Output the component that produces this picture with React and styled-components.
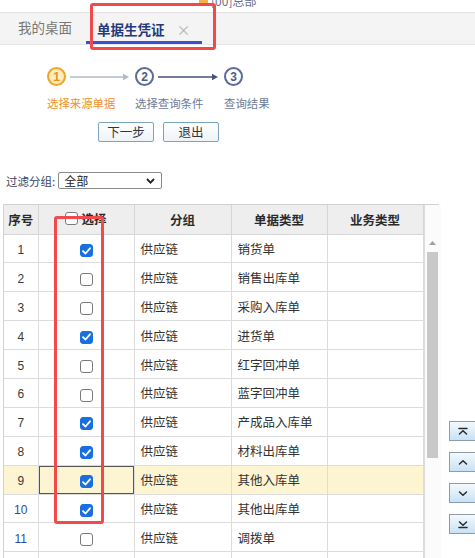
import React from 'react';
import styled, { createGlobalStyle } from 'styled-components';

const Global = createGlobalStyle`
  html, body { margin: 0; padding: 0; background: #fff; }
  body {
    font-family: "Noto Sans CJK SC", "Microsoft YaHei", sans-serif;
    color: #333;
  }
  * { box-sizing: border-box; }
`;

const Page = styled.div`
  width: 475px;
  height: 558px;
  overflow: hidden;
  background: #fff;
`;

/* ---------- header strip & tabs ---------- */
const TopStrip = styled.div`
  height: 12px;
  overflow: hidden;
  padding-left: 199px;
`;

const OrgLabel = styled.div`
  margin-top: -7px;
  display: flex;
  align-items: center;
  gap: 3px;
  font-size: 12px;
  line-height: 16px;
  color: #6a7088;
`;

const OrgIcon = styled.span`
  width: 9px;
  height: 10px;
  border-radius: 1px;
  background: #f2b24a;
`;

const TabBar = styled.div`
  height: 33px;
  display: flex;
  padding-left: 18px;
  gap: 14px;
  background: #f4f4f4;
  border-top: 1px solid #e2e2e2;
  border-bottom: 1px solid #e6e6e6;
`;

const Tab = styled.div`
  position: relative;
  height: 31px;
  padding: 3px ${p => (p.$active ? '11px 0 11px' : '0')};
  display: flex;
  align-items: center;
  gap: 12px;
  font-size: 13.5px;
  line-height: 18px;
  font-weight: ${p => (p.$active ? 700 : 400)};
  color: ${p => (p.$active ? '#26387a' : '#777')};
  border-bottom: 3px solid ${p => (p.$active ? '#3b4fd0' : 'transparent')};

  ${p =>
    p.$marked &&
    `&::after {
      content: '';
      position: absolute;
      left: 4px;
      right: -14px;
      top: -10px;
      bottom: -9px;
      border: 3px solid #f04a4a;
      border-radius: 3px;
      pointer-events: none;
    }`}
`;

const CloseMark = styled.span`
  font-size: 14px;
  font-weight: 400;
  color: #b4b4b4;
`;

/* ---------- wizard steps ---------- */
const Steps = styled.div`
  margin: 22px 0 0 47px;
  display: grid;
  grid-template-columns: 88px 89px auto;
  row-gap: 9px;
`;

const StepHead = styled.div`
  display: flex;
  align-items: center;
  height: 19px;
`;

const Circle = styled.div`
  width: 19px;
  height: 19px;
  border-radius: 50%;
  flex: none;
  display: flex;
  align-items: center;
  justify-content: center;
  font-family: "Liberation Sans", Arial, sans-serif;
  font-size: 12px;
  font-weight: 700;
  border: 2px solid ${p => (p.$current ? '#f0a52a' : '#5b6a98')};
  background: ${p =>
    p.$current ? 'radial-gradient(circle, #fff6d8 0%, #fde3a0 100%)' : '#fff'};
  color: ${p => (p.$current ? '#e8901e' : '#4c5a8c')};
`;

const Connector = styled.svg`
  margin-left: ${p => p.$gap}px;
  flex: none;
`;

const StepLabel = styled.div`
  font-size: 11.4px;
  line-height: 16px;
  white-space: nowrap;
  color: ${p => (p.$current ? '#f0902a' : '#6c7a9a')};
`;

const ButtonRow = styled.div`
  margin: 11px 0 0 98px;
  display: flex;
  gap: 9px;
`;

const WizardButton = styled.button`
  width: 56px;
  height: 20px;
  padding: 0;
  font-family: inherit;
  font-size: 12.5px;
  line-height: 16px;
  color: #333;
  background: linear-gradient(#ffffff, #eef3f7);
  border: 1px solid #7ba4be;
  border-radius: 2px;
`;

/* ---------- filter ---------- */
const FilterRow = styled.div`
  margin: 30px 0 0 6px;
  display: flex;
  align-items: center;
  gap: 3px;
  height: 17px;
`;

const FilterLabel = styled.span`
  font-size: 11.5px;
  color: #3a4560;
`;

const FakeSelect = styled.div`
  width: 104px;
  height: 17px;
  border: 1px solid #8a8a8a;
  border-radius: 2px;
  padding: 0 6px 0 5px;
  display: flex;
  align-items: center;
  justify-content: space-between;
  font-size: 12px;
  color: #222;
`;

/* ---------- grid ---------- */
const GridArea = styled.div`
  margin-top: 15px;
  display: flex;
  align-items: flex-start;
`;

const GridFrame = styled.div`
  position: relative;
  margin-left: 3px;
  width: 436px;
  display: flex;
  border: 1px solid #d2d2d2;
  border-bottom: none;
`;

const Marker = styled.div`
  position: absolute;
  left: 50px;
  top: 11px;
  width: 50px;
  height: 308px;
  border: 3px solid #f04a4a;
  border-radius: 3px;
  pointer-events: none;
`;

const Table = styled.table`
  width: 419px;
  table-layout: fixed;
  border-collapse: collapse;
  font-size: 12.5px;
`;

const HeadCell = styled.th`
  height: 29px;
  padding: 0;
  background: #eeeeee;
  border: 1px solid #d6d6d6;
  border-top: none;
  font-weight: 700;
  color: #2a2a2a;
  text-align: center;
  &:first-child { border-left: none; }
`;

const HeadInner = styled.span`
  display: inline-flex;
  align-items: center;
  gap: 3px;
`;

const Row = styled.tr`
  height: 28.9px;
  background: ${p => (p.$current ? '#fdf4d2' : '#fff')};
`;

const Cell = styled.td`
  padding: 0 ${p => (p.$align === 'center' ? '0' : '6px')};
  border: 1px solid #dcdcdc;
  text-align: ${p => p.$align || 'left'};
  color: ${p => p.$color || '#333'};
  white-space: nowrap;
  overflow: hidden;
  box-shadow: ${p => (p.$focused ? 'inset 0 0 0 1px #555' : 'none')};
  &:first-child { border-left: none; }
`;

const NumText = styled.span`
  font-family: "Liberation Sans", Arial, sans-serif;
  font-size: 12px;
`;

const Check = styled.span`
  display: inline-flex;
  align-items: center;
  justify-content: center;
  vertical-align: middle;
  width: 13px;
  height: 13px;
  border-radius: 3px;
  border: 1px solid ${p => (p.$on ? '#1a6fe0' : '#7a7a7a')};
  background: ${p => (p.$on ? '#1a6fe0' : '#fff')};
`;

const ScrollCol = styled.div`
  width: 17px;
  flex: none;
  padding: 29px 2px 0 2px;
  border-left: 1px solid #dcdcdc;
  background: #fbfbfb;
  display: flex;
  flex-direction: column;
  align-items: center;
`;

const ScrollArrow = styled.div`
  height: 18px;
  display: flex;
  align-items: center;
  justify-content: center;
`;

const Thumb = styled.div`
  width: 11px;
  height: 206px;
  background: #c8c8c8;
`;

const MoveColumn = styled.div`
  margin: 217px 0 0 10px;
  display: flex;
  flex-direction: column;
  gap: 11px;
`;

const MoveButton = styled.div`
  width: 32px;
  height: 20px;
  padding-left: 8px;
  display: flex;
  align-items: center;
  border: 1px solid #8d9cab;
  background: linear-gradient(#f4f9fd, #c8e2f6);
`;

const rows = [
  [1, true, '销货单'],
  [2, false, '销售出库单'],
  [3, false, '采购入库单'],
  [4, true, '进货单'],
  [5, false, '红字回冲单'],
  [6, false, '蓝字回冲单'],
  [7, true, '产成品入库单'],
  [8, true, '材料出库单'],
  [9, true, '其他入库单'],
  [10, true, '其他出库单'],
  [11, false, '调拨单'],
];

const Arrow = ({ width, color, gap }) => (
  <Connector $gap={gap} width={width} height="8" viewBox={`0 0 ${width} 8`}>
    <line x1="0" y1="4" x2={width - 5} y2="4" stroke={color} strokeWidth="1.3" />
    <path d={`M${width - 6} 0.8 L${width} 4 L${width - 6} 7.2 Z`} fill={color} />
  </Connector>
);

const Tick = () => (
  <svg width="9" height="8" viewBox="0 0 9 8">
    <path d="M1 4.2 L3.5 6.5 L8 1.3" fill="none" stroke="#fff" strokeWidth="1.8" strokeLinecap="round" strokeLinejoin="round" />
  </svg>
);

const MoveIcon = ({ kind }) => {
  const s = { fill: 'none', stroke: '#2a2a2a', strokeWidth: 1.5, strokeLinecap: 'round', strokeLinejoin: 'round' };
  return (
    <svg width="10" height="9" viewBox="0 0 10 9">
      {kind === 'top' && (<><line x1="1" y1="1.5" x2="9" y2="1.5" {...s} /><path d="M1.5 7 L5 3.8 L8.5 7" {...s} /></>)}
      {kind === 'up' && <path d="M1.5 6 L5 2.8 L8.5 6" {...s} />}
      {kind === 'down' && <path d="M1.5 3 L5 6.2 L8.5 3" {...s} />}
      {kind === 'bottom' && (<><path d="M1.5 2 L5 5.2 L8.5 2" {...s} /><line x1="1" y1="7.5" x2="9" y2="7.5" {...s} /></>)}
    </svg>
  );
};

export default function App() {
  return (
    <Page>
      <Global />
      <TopStrip>
        <OrgLabel>
          <OrgIcon />
          <span>[00]总部</span>
        </OrgLabel>
      </TopStrip>

      <TabBar>
        <Tab>我的桌面</Tab>
        <Tab $active $marked>
          单据生凭证
          <CloseMark>×</CloseMark>
        </Tab>
      </TabBar>

      <Steps>
        <StepHead>
          <Circle $current>1</Circle>
          <Arrow width={59} color="#b3b7c8" gap={4} />
        </StepHead>
        <StepHead>
          <Circle>2</Circle>
          <Arrow width={60} color="#46527e" gap={4} />
        </StepHead>
        <StepHead>
          <Circle>3</Circle>
        </StepHead>
        <StepLabel $current>选择来源单据</StepLabel>
        <StepLabel>选择查询条件</StepLabel>
        <StepLabel>查询结果</StepLabel>
      </Steps>

      <ButtonRow>
        <WizardButton>下一步</WizardButton>
        <WizardButton>退出</WizardButton>
      </ButtonRow>

      <FilterRow>
        <FilterLabel>过滤分组:</FilterLabel>
        <FakeSelect>
          <span>全部</span>
          <svg width="9" height="6" viewBox="0 0 9 6">
            <path d="M1 1 L4.5 4.6 L8 1" fill="none" stroke="#222" strokeWidth="1.8" />
          </svg>
        </FakeSelect>
      </FilterRow>

      <GridArea>
        <GridFrame>
          <Table>
            <colgroup>
              <col style={{ width: 34 }} />
              <col style={{ width: 96 }} />
              <col style={{ width: 97 }} />
              <col style={{ width: 96 }} />
              <col style={{ width: 96 }} />
            </colgroup>
            <thead>
              <tr>
                <HeadCell>序号</HeadCell>
                <HeadCell>
                  <HeadInner>
                    <Check />
                    选择
                  </HeadInner>
                </HeadCell>
                <HeadCell>分组</HeadCell>
                <HeadCell>单据类型</HeadCell>
                <HeadCell>业务类型</HeadCell>
              </tr>
            </thead>
            <tbody>
              {rows.map(([n, on, type]) => (
                <Row key={n} $current={n === 9}>
                  <Cell $align="center" $color={n >= 10 ? '#2f4a98' : '#3a3a3a'}>
                    <NumText>{n}</NumText>
                  </Cell>
                  <Cell $align="center" $focused={n === 9}>
                    <Check $on={on}>{on && <Tick />}</Check>
                  </Cell>
                  <Cell>供应链</Cell>
                  <Cell>{type}</Cell>
                  <Cell />
                </Row>
              ))}
              <Row>
                <Cell />
                <Cell />
                <Cell />
                <Cell />
                <Cell />
              </Row>
            </tbody>
          </Table>
          <ScrollCol>
            <ScrollArrow>
              <svg width="7" height="4" viewBox="0 0 7 4">
                <path d="M0 4 L3.5 0 L7 4 Z" fill="#a0a0a0" />
              </svg>
            </ScrollArrow>
            <Thumb />
          </ScrollCol>
          <Marker />
        </GridFrame>

        <MoveColumn>
          <MoveButton><MoveIcon kind="top" /></MoveButton>
          <MoveButton><MoveIcon kind="up" /></MoveButton>
          <MoveButton><MoveIcon kind="down" /></MoveButton>
          <MoveButton><MoveIcon kind="bottom" /></MoveButton>
        </MoveColumn>
      </GridArea>
    </Page>
  );
}
